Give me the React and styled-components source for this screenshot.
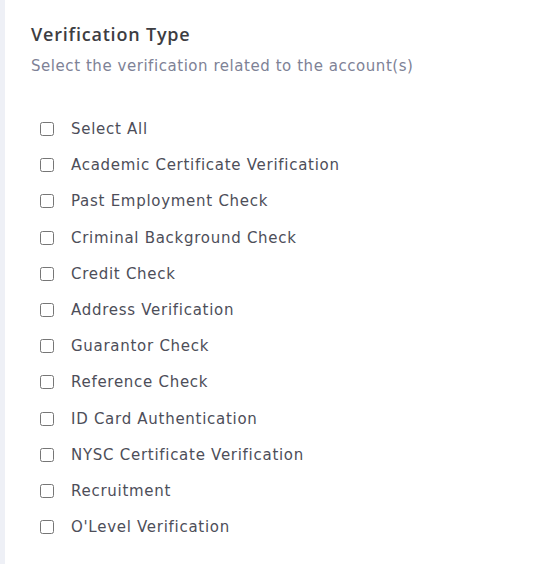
import React, { useState } from "react";
import styled, { createGlobalStyle } from "styled-components";

const GlobalStyle = createGlobalStyle`
  html, body {
    margin: 0;
    padding: 0;
    background: #ffffff;
  }
  body {
    font-family: "DejaVu Sans", "Open Sans", sans-serif;
  }
`;

const OPTIONS = [
  "Academic Certificate Verification",
  "Past Employment Check",
  "Criminal Background Check",
  "Credit Check",
  "Address Verification",
  "Guarantor Check",
  "Reference Check",
  "ID Card Authentication",
  "NYSC Certificate Verification",
  "Recruitment",
  "O'Level Verification",
];

function App() {
  const [checked, setChecked] = useState({});

  const allChecked = OPTIONS.every((o) => checked[o]);

  const toggle = (name) => {
    setChecked({ ...checked, [name]: !checked[name] });
  };

  const toggleAll = () => {
    const next = {};
    OPTIONS.forEach((o) => { next[o] = !allChecked; });
    setChecked(next);
  };

  return (
    <Page>
      <GlobalStyle />
      <SideStrip />
      <Panel>
        <Title>Verification Type</Title>
        <Subtitle>Select the verification related to the account(s)</Subtitle>
        <List>
          <Option>
            <Checkbox type="checkbox" checked={allChecked} onChange={toggleAll} />
            <Label>Select All</Label>
          </Option>
          {OPTIONS.map((name) => (
            <Option key={name}>
              <Checkbox
                type="checkbox"
                checked={!!checked[name]}
                onChange={() => toggle(name)}
              />
              <Label>{name}</Label>
            </Option>
          ))}
        </List>
      </Panel>
    </Page>
  );
}

const Page = styled.div`
  display: flex;
  min-height: 564px;
`;

const SideStrip = styled.div`
  width: 5px;
  flex-shrink: 0;
  background-color: #eef0f6;
`;

const Panel = styled.div`
  flex: 1;
  padding: 20px 26px 0 26px;
  display: flex;
  flex-direction: column;
`;

const Title = styled.h2`
  margin: 0;
  font-family: "Open Sans", sans-serif;
  font-size: 18px;
  font-weight: 600;
  letter-spacing: 0.8px;
  line-height: 28px;
  color: #3d3d42;
`;

const Subtitle = styled.p`
  margin: 6px 0 0 0;
  font-size: 15px;
  letter-spacing: 0.55px;
  line-height: 24px;
  color: #7e8296;
`;

const List = styled.div`
  display: flex;
  flex-direction: column;
  margin-top: 33px;
`;

const Option = styled.label`
  display: flex;
  align-items: center;
  height: 36.2px;
  cursor: pointer;
`;

const Checkbox = styled.input`
  width: 14px;
  height: 14px;
  margin: 0 17px 0 9px;
  cursor: pointer;
`;

const Label = styled.span`
  font-size: 15px;
  letter-spacing: 0.72px;
  color: #4d4e59;
`;

export default App;
